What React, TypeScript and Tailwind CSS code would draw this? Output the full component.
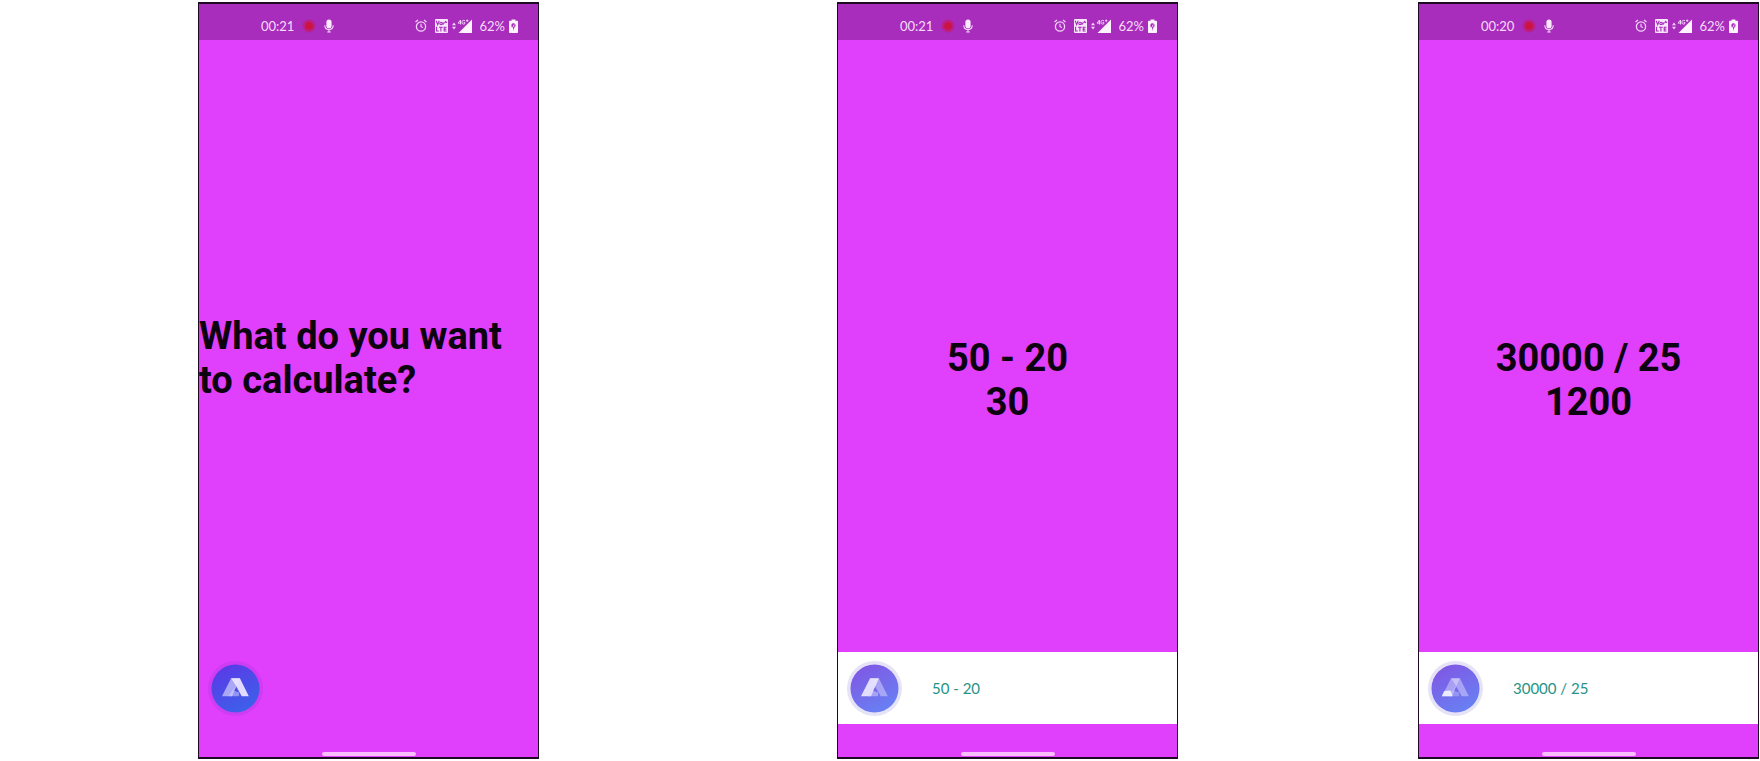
import React, { useId } from "react";

type Variant = "prompt" | "left" | "base";

interface PhoneProps {
  name: string;
  time: string;
  lines: string[];
  transcript?: string;
  mark: Variant;
}

const RecordIcon = () => (
  <svg className="h-[14px] w-[14px]" viewBox="0 0 14 14" aria-hidden="true">
    <circle cx="7" cy="7" r="6.4" fill="#c01c74" opacity="0.75" />
    <circle cx="7" cy="7" r="3.8" fill="#cb1440" />
  </svg>
);

const MicIcon = () => (
  <svg className="h-[14px] w-[10px]" viewBox="0 0 10 14" fill="none" aria-hidden="true">
    <rect x="2.4" y="0.5" width="5.2" height="8.8" rx="2.6" fill="#fbeafd" />
    <path d="M.8 6.3c0 2.8 1.8 4.3 4.2 4.3s4.2-1.5 4.2-4.3M5 10.6V13M3.2 13h3.6" stroke="#f3d8f8" strokeWidth="1.1" />
  </svg>
);

const AlarmIcon = () => (
  <svg className="h-[14px] w-[12px]" viewBox="0 0 12 14" fill="none" stroke="#f3d3f8" aria-hidden="true">
    <circle cx="6" cy="7.5" r="4.6" strokeWidth="1.3" />
    <path d="M.5 3.1 3 1.1M11.5 3.1 9 1.1" strokeWidth="1.3" />
    <path d="M6 4.8v2.9l2 .8" strokeWidth="1.1" />
  </svg>
);

const VolteIcon = () => (
  <svg className="h-[14px] w-[13px]" viewBox="0 0 13 14" aria-hidden="true">
    <rect width="13" height="14" rx="1" fill="#fae6fc" />
    <g fill="none" stroke="#a42fb8" strokeWidth="1.1">
      <path d="m1.2 1.8 1.5 4 1.5-4" />
      <circle cx="6" cy="4.4" r="1.2" />
      <path d="M8 6V3.2M8 4.2h1.4M9.6 4l1.1-1.6 1.2 1.6" />
      <path d="M1.6 7.7V12h2.2M4 8.2h3.8M5.9 8.2v4.3M11.6 8.2H9.2V12h2.4M9.2 10.1h2.1" />
    </g>
  </svg>
);

const SignalIcon = () => (
  <svg className="h-[14px] w-[20px]" viewBox="0 0 20 14" aria-hidden="true">
    <path d="m0 6.2 2-2.6 2 2.6zM0 7.8l2 2.6 2-2.6z" fill="#f3d3f8" />
    <path d="M20 .5V14H6.5z" fill="#fdf2fe" />
    <path d="M5.5 0h9.4v3.3L12 6H5.5z" fill="#a62cbc" />
    <g fill="none" stroke="#f3d3f8" strokeWidth="1">
      <path d="M8.5 5.5V1L6 4.1h3.3" />
      <path d="M13 1.7c-2.4-1-3 .2-3 1.6 0 1.800 1.500 2.200 2.800 1.500V3.400h-1.200" />
      <path d="M14 1.700h2.400M15.200.5v2.400" />
    </g>
  </svg>
);

const BatteryIcon = () => (
  <svg className="h-[14px] w-[9px]" viewBox="0 0 9 14" aria-hidden="true">
    <path d="M2.600.5h3.800v1.300H8c.6 0 1 .4 1 1V13c0 .6-.4 1-1 1H1c-.6 0-1-.4-1-1V2.800c0-.6.4-1 1-1h1.600z" fill="#fdf2fe" />
    <path d="M2.400 6.200c0-2.600 4.300-2.500 4.200.2 0 1.300-1 1.900-1.600 2.700L4 11.900V8.200H2.600z" fill="#a62cbc" />
    <path d="m5.300 5.400-1.200 2h1.300" fill="none" stroke="#fdf2fe" strokeWidth=".7" />
  </svg>
);

const AssistantMark = ({ variant }: { variant: Variant }) => {
  const id = useId();
  const deep = variant === "prompt";
  return (
    <svg className="h-full w-full" viewBox="0 0 50 50" aria-hidden="true">
      <defs>
        <linearGradient id={id} x1="0.25" y1="0" x2="0.8" y2="1">
          <stop offset="0" stopColor={deep ? "#5a3ae6" : "#8058e4"} />
          <stop offset="1" stopColor={deep ? "#3b63ea" : "#6683f4"} />
        </linearGradient>
      </defs>
      <circle cx="25" cy="25" r="24.500" fill={`url(#${id})`} />
      <path
        d="M20.500 14.500h9l-3.700 8.500L21.500 33H11.200z"
        fill="#e9e4ff"
        opacity={variant === "left" ? 0.95 : variant === "base" ? 0.45 : 0.6}
      />
      <path
        d="M20.500 14.500h9L38.600 33h-7.300l-5.600-10.500z"
        fill="#e9e4ff"
        opacity={deep ? 0.95 : 0.45}
      />
      <path
        d="m25.700 22.500-4.500 5.300L18 33h10.700V29z"
        fill="#d9d6ff"
        opacity={variant === "base" ? 0.35 : 0.5}
      />
      {variant === "base" && <path d="m13.500 27.500 6.500-.5 2 6H11z" fill="#f5f2ff" opacity="0.9" />}
      <path d="m25.700 23.500 2.900 5.500-4.800-1.800z" fill={deep ? "#4650e4" : "#7568e8"} />
    </svg>
  );
};

const StatusBar = ({ time }: { time: string }) => (
  <header className="flex h-9 items-center justify-between bg-[#a82dbc] pl-[62px] pr-5 pt-2 font-['Lato','Liberation_Sans',sans-serif] text-[13px] leading-4 text-[#f6dcfa]">
    <div className="flex items-center">
      <time className="w-[41px]">{time}</time>
      <RecordIcon />
      <span className="ml-2 flex">
        <MicIcon />
      </span>
    </div>
    <div className="flex items-center">
      <AlarmIcon />
      <span className="ml-2 flex">
        <VolteIcon />
      </span>
      <span className="ml-1 flex">
        <SignalIcon />
      </span>
      <span className="ml-2">62%</span>
      <span className="ml-1 flex">
        <BatteryIcon />
      </span>
    </div>
  </header>
);

const Phone = ({ name, time, lines, transcript, mark }: PhoneProps) => {
  const listening = transcript !== undefined;
  return (
    <section
      aria-label={name}
      className="flex min-w-0 flex-col border-x border-b-2 border-t-2 border-[#1d0a22] bg-[#e040fb]"
    >
      <StatusBar time={time} />
      <div
        className={
          listening
            ? "flex flex-1 flex-col justify-center pt-[68px] text-center"
            : "flex flex-1 flex-col justify-center pt-6"
        }
      >
        <h1 className="font-['Roboto','Liberation_Sans',sans-serif] text-[38px] font-bold leading-[44px] text-[#0d0210]">
          {lines.map((line) => (
            <span key={line} className="block">
              {line}
            </span>
          ))}
        </h1>
      </div>
      <div className={listening ? "flex h-[72px] items-center bg-white pl-[9px]" : "flex h-[72px] items-center pl-[9px]"}>
        <button
          type="button"
          aria-label="Voice assistant"
          className={
            listening
              ? "h-[55px] w-[55px] shrink-0 rounded-full bg-[#e6e3f6] p-[3px]"
              : "h-[55px] w-[55px] shrink-0 rounded-full bg-[#cf3df3] p-[3px]"
          }
        >
          <AssistantMark variant={mark} />
        </button>
        {listening && (
          <p className="ml-[30px] font-['Lato','Liberation_Sans',sans-serif] text-[15px] leading-5 text-[#269386]">
            {transcript}
          </p>
        )}
      </div>
      <footer className="flex h-[33px] items-end justify-center pb-px">
        <div className="h-1 w-[94px] rounded-sm bg-[#fbbdfd]" />
      </footer>
    </section>
  );
};

export default function App() {
  return (
    <main className="grid min-h-screen grid-cols-[198fr_341fr_298fr_341fr_240fr_341fr_1fr] bg-white pb-[2px] pt-[2px]">
      <div />
      <Phone name="Prompt" time="00:21" lines={["What do you want", "to calculate?"]} mark="prompt" />
      <div />
      <Phone name="Subtraction" time="00:21" lines={["50 - 20", "30"]} transcript="50 - 20" mark="left" />
      <div />
      <Phone name="Division" time="00:20" lines={["30000 / 25", "1200"]} transcript="30000 / 25" mark="base" />
      <div />
    </main>
  );
}
